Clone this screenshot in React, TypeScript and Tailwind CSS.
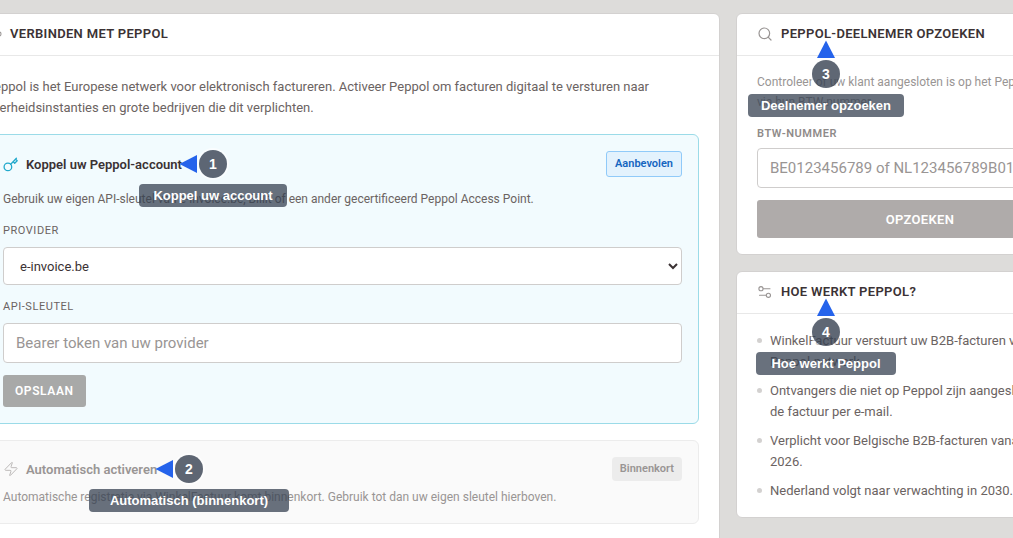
import type { ReactNode } from 'react'
import { Search, Zap } from 'lucide-react'

const steps = [
  'WinkelFactuur verstuurt uw B2B-facturen via het Peppol-netwerk.',
  'Ontvangers die niet op Peppol zijn aangesloten krijgen de factuur per e-mail.',
  'Verplicht voor Belgische B2B-facturen vanaf 1 januari 2026.',
  'Nederland volgt naar verwachting in 2030.',
]

function KeyIcon() {
  return (
    <svg width="16" height="16" viewBox="0 0 16 16" fill="none" stroke="currentColor" strokeWidth="1.3" strokeLinecap="round" strokeLinejoin="round">
      <circle cx="4.9" cy="10.9" r="3.8" />
      <path d="M7.7 8.2 L13.4 2.3 M10.2 5.7 L11.7 7.2 L14.2 4.8 L12.6 3.2" />
    </svg>
  )
}

function NetworkIcon() {
  return (
    <svg width="16" height="16" viewBox="0 0 16 16" fill="none" stroke="currentColor" strokeWidth="1.1" strokeLinecap="round">
      <circle cx="3" cy="8" r="2" />
      <circle cx="13" cy="8" r="2" />
      <path d="M5 8H11" />
    </svg>
  )
}

function SlidersIcon() {
  return (
    <svg width="16" height="16" viewBox="0 0 16 16" fill="none" stroke="currentColor" strokeWidth="1.1" strokeLinecap="round">
      <circle cx="4" cy="4.7" r="2.1" />
      <path d="M6.3 4.7H13 M2.5 11.3H9" />
      <circle cx="11.4" cy="11.3" r="2.1" />
    </svg>
  )
}

function Card({ icon, title, children }: { icon: ReactNode; title: string; children: ReactNode }) {
  return (
    <section className="rounded-md border border-[#d3d1d0] bg-white">
      <header className="flex items-center gap-2 border-b border-[#e8e8e8] px-5 pt-[10px] pb-3">
        <span className="text-[#999594]">{icon}</span>
        <h2 className="text-[13px] leading-[19px] font-semibold tracking-wide text-[#3b3234] uppercase">{title}</h2>
      </header>
      {children}
    </section>
  )
}

type CalloutProps = { n: number; label: string; side: 'left' | 'top'; className: string }

// className places the middle of the numbered disc
function Callout({ n, label, side, className }: CalloutProps) {
  return (
    <div className={`pointer-events-none absolute size-0 font-['Liberation_Sans'] font-bold text-white ${className}`}>
      <svg
        width="18"
        height="18"
        viewBox="0 0 18 18"
        fill="#2563eb"
        className={side === 'left' ? 'absolute top-[-9px] left-[-34px]' : 'absolute top-[-34px] left-[-9px]'}
      >
        <path d={side === 'left' ? 'M0.5 9 L18 0 V18 Z' : 'M9 0.5 L18 18 H0 Z'} />
      </svg>
      <span className="absolute top-[-14px] left-[-14px] flex size-7 items-center justify-center rounded-full bg-[#374151]/80 text-sm ring-2 ring-white/60">
        {n}
      </span>
      <span
        className="absolute top-5 left-0 -translate-x-1/2 rounded bg-[#374151]/75 text-center text-[13px] leading-[23px] whitespace-nowrap"
        style={{ width: Math.min(200, label.length * 8 + 12) }}
      >
        {label}
      </span>
    </div>
  )
}

export default function App() {
  return (
    <main className="relative h-screen overflow-hidden bg-[#dddcda] pt-[13px] font-['Roboto',sans-serif] text-[13px] leading-[21px] text-[#6b6362]">
      <div className="-mr-[91px] -ml-[35px] grid grid-cols-[1fr_368px] items-start gap-4">
        <Card icon={<NetworkIcon />} title="Verbinden met Peppol">
          <div className="p-5">
            <p>
              Peppol is het Europese netwerk voor elektronisch factureren. Activeer Peppol om facturen digitaal te
              versturen naar overheidsinstanties en grote bedrijven die dit verplichten.
            </p>

            <form className="mt-4 rounded-md border border-[#9bdbe8] bg-[#f2fbfe] p-4">
              <div className="flex items-center justify-between">
                <h3 className="flex items-center gap-[7px] font-semibold text-[#3b3234]">
                  <span className="text-[#22a9cc]"><KeyIcon /></span>
                  Koppel uw Peppol-account
                </h3>
                <span className="rounded-[3px] border border-[#90caf9] bg-[#e3f2fd] px-2 text-[11px] leading-6 font-semibold text-[#1565c0]">
                  Aanbevolen
                </span>
              </div>
              <p className="mt-3 text-xs leading-5">
                Gebruik uw eigen API-sleutel van e-invoice.be, Billit of een ander gecertificeerd Peppol Access Point.
              </p>
              <label htmlFor="provider" className="mt-3 block text-[11px] leading-5 tracking-wider uppercase">
                Provider
              </label>
              <select id="provider" className="mt-[6px] block h-[38px] w-full rounded border border-[#cfcdcc] bg-white px-3 text-[#3b3234]">
                <option>e-invoice.be</option>
              </select>
              <label htmlFor="api-key" className="mt-3 block text-[11px] leading-5 tracking-wider uppercase">
                API-sleutel
              </label>
              <input
                id="api-key"
                className="mt-[6px] block h-10 w-full rounded border border-[#cfcdcc] bg-white px-3 text-[15px] placeholder:text-[#999594]"
                placeholder="Bearer token van uw provider"
              />
              <button type="button" className="mt-3 block h-8 rounded-[3px] bg-[#a8a9a8] px-3 text-xs font-semibold tracking-wider text-white uppercase">
                Opslaan
              </button>
            </form>

            <div className="mt-4 rounded-md border border-[#ececec] bg-[#fafafa] p-4 text-[#999594]">
              <div className="flex items-center justify-between">
                <h3 className="flex items-center gap-[7px] font-semibold">
                  <Zap size={16} strokeWidth={1.5} className="text-[#bdbab9]" />
                  Automatisch activeren
                </h3>
                <span className="rounded bg-[#ececec] px-2 text-[11px] leading-6 font-semibold">Binnenkort</span>
              </div>
              <p className="mt-[6px] text-xs leading-5">
                Automatische registratie via WinkelFactuur komt binnenkort. Gebruik tot dan uw eigen sleutel hierboven.
              </p>
            </div>
          </div>
        </Card>

        <div className="grid gap-4">
          <Card icon={<Search size={16} strokeWidth={1.8} />} title="Peppol-deelnemer opzoeken">
            <form className="px-5 py-4">
              <p className="text-xs leading-5 text-[#999594]">
                Controleer of uw klant aangesloten is op het Peppol-netwerk via hun BTW-nummer.
              </p>
              <label htmlFor="vat" className="mt-3 block text-[11px] leading-5 font-semibold tracking-wider text-[#8f8b8a] uppercase">
                BTW-nummer
              </label>
              <input
                id="vat"
                className="mt-1 block h-10 w-full rounded border border-[#cfcdcc] px-3 text-[15px] placeholder:text-[#999594]"
                placeholder="BE0123456789 of NL123456789B01"
              />
              <button type="button" className="mt-3 block h-[38px] w-full rounded-[3px] bg-[#afabaa] text-[13px] font-semibold tracking-wide text-white uppercase">
                Opzoeken
              </button>
            </form>
          </Card>

          <Card icon={<SlidersIcon />} title="Hoe werkt Peppol?">
            <ul className="space-y-2 px-5 py-4">
              {steps.map((step) => (
                <li key={step} className="flex items-start gap-2">
                  <span className="mt-2 size-[5px] shrink-0 rounded-full bg-[#d3d1d0]" />
                  <span>{step}</span>
                </li>
              ))}
            </ul>
          </Card>
        </div>
      </div>

      <Callout n={1} label="Koppel uw account" side="left" className="top-[164px] left-[213px]" />
      <Callout n={2} label="Automatisch (binnenkort)" side="left" className="top-[469px] left-[189px]" />
      <Callout n={3} label="Deelnemer opzoeken" side="top" className="top-[74px] left-[826px]" />
      <Callout n={4} label="Hoe werkt Peppol" side="top" className="top-[332px] left-[826px]" />
    </main>
  )
}
